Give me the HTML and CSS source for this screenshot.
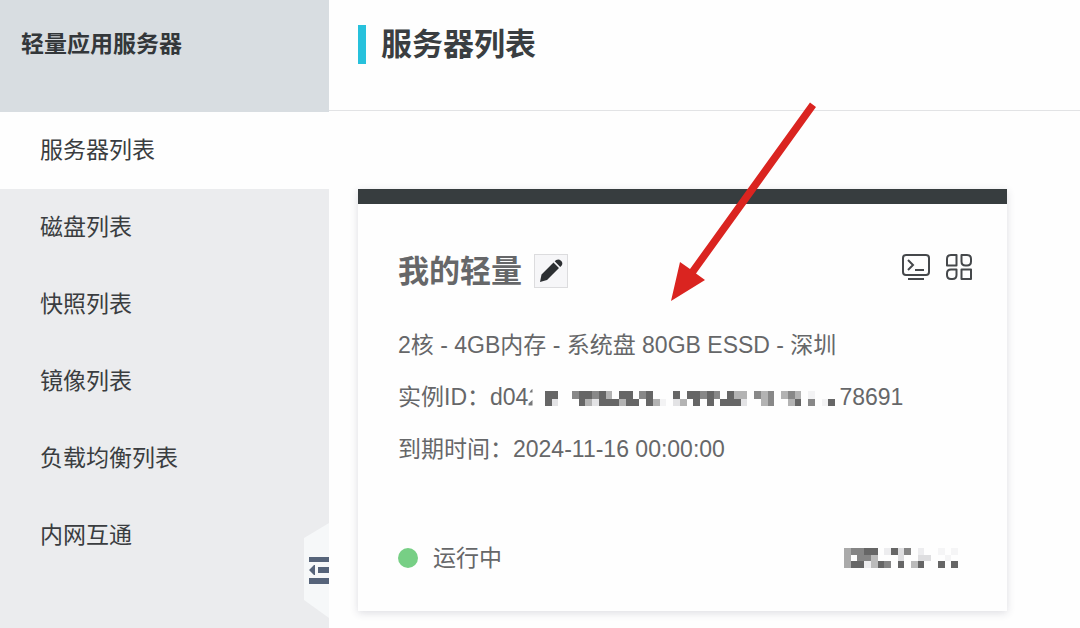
FILE: index.html
```html
<!DOCTYPE html>
<html lang="zh-CN">
<head>
<meta charset="utf-8">
<meta name="viewport" content="width=device-width, initial-scale=1">
<title>服务器列表</title>
<link rel="stylesheet" href="styles.css">
</head>
<body>
<div class="layout">
  <aside class="sidebar">
    <div class="sidebar-title">轻量应用服务器</div>
    <nav class="menu">
      <a class="menu-item active" href="#servers" aria-current="page">服务器列表</a>
      <a class="menu-item" href="#disks">磁盘列表</a>
      <a class="menu-item" href="#snapshots">快照列表</a>
      <a class="menu-item" href="#images">镜像列表</a>
      <a class="menu-item" href="#balancers">负载均衡列表</a>
      <a class="menu-item" href="#intranet">内网互通</a>
    </nav>
    <button class="collapse" type="button" aria-label="收起菜单">
      <svg width="25" height="95" viewBox="0 0 25 95" aria-hidden="true">
        <path d="M25 0 0 15v62l25 18z" fill="#f6f8f9"/>
        <path d="M5 34h20v5H5zM14 44h11v6H14zM5 55h20v6H5zM5 47l5-5h1v10h-1z" fill="#56647a"/>
      </svg>
    </button>
  </aside>
  <main class="main">
    <header class="page-head">
      <h1 class="page-title">服务器列表</h1>
    </header>
    <section class="content">
      <article class="card">
        <div class="card-head">
          <h2 class="card-title">我的轻量</h2>
          <button class="edit" type="button" aria-label="编辑名称">
            <svg width="32" height="32" viewBox="0 0 32 32" aria-hidden="true">
              <path d="M5 27 6.500 19.500 18.500 7.500 24 13 12 25zM19.700 6.300l1.500-1.300q2.500-1.500 4.800.7t.7 4.800l-1.500 1.500z" fill="#2c2f32"/>
            </svg>
          </button>
          <div class="tools">
            <button class="tool" type="button" aria-label="远程连接">
              <svg width="28" height="28" viewBox="0 0 28 28" fill="none" stroke="#45484b" stroke-width="2" aria-hidden="true">
                <rect x="1" y="1" width="26" height="20" rx="3"/>
                <path d="M6 6l5 5-5 5M13 16h9M6 25h16"/>
              </svg>
            </button>
            <button class="tool" type="button" aria-label="更多操作">
              <svg width="28" height="28" viewBox="0 0 28 28" fill="none" stroke="#45484b" stroke-width="2" aria-hidden="true">
                <path d="M6 1h5.500v10.500H2V5q0-4 4-4zM16.500 1H22q4 0 4 4v2.500q0 4-4 4h-1.500q-4 0-4-4zM6 15.500h5.500V21q0 4-4 4H6q-4 0-4-4v-1.500q0-4 4-4zM16.500 15.500H26V25h-9.500z" stroke-linejoin="round"/>
              </svg>
            </button>
          </div>
        </div>
        <div class="info">
          <p class="line">2核 - 4GB内存 - 系统盘 80GB ESSD - 深圳</p>
          <p class="line id-line">实例ID：d04
            <svg class="mask-id" width="307" height="17" viewBox="0 0 307 17" aria-hidden="true">
              <path fill="#77787a" d="M3 1 4.500 0v3.500H1.500zM4.500 11v5.500H0.500v-2z"/>
              <svg x="17" y="2" width="290" height="15" viewBox="0 0 43 2" preserveAspectRatio="none" shape-rendering="crispEdges">
                <path fill="#666" d="M0 0h1v2h-1zM1 0h1v1h-1zM5 0h1v2h-1zM6 0h1v1h-1zM8 0h1v2h-1zM9 1h2v1h-2zM11 0h1v1h-1zM12 0h1v2h-1zM13 1h1v1h-1zM15 0h1v2h-1zM19 0h1v1h-1zM21 0h1v1h-1zM22 0h1v2h-1zM24 0h1v2h-1zM26 1h3v1h-3zM27 0h1v1h-1zM37 1h1v1h-1zM42 1h1v1h-1z"/>
                <path fill="#888" d="M4 0h1v1h-1zM7 0h1v1h-1zM14 0h1v1h-1zM23 0h1v1h-1zM25 0h1v1h-1zM31 0h1v1h-1zM33 0h1v2h-1zM36 0h1v1h-1zM39 1h1v1h-1z"/>
                <path fill="#b3b3b3" d="M6 1h1v1h-1zM9 0h1v1h-1zM11 1h1v1h-1zM16 1h1v1h-1zM20 1h1v1h-1zM28 0h2v1h-2zM32 0h1v2h-1zM35 0h1v1h-1zM36 1h1v1h-1zM37 0h1v1h-1z"/>
                <path fill="#e3e3e5" d="M1 1h1v1h-1zM7 1h1v1h-1zM19 1h1v1h-1zM29 1h1v1h-1z"/>
                <path fill="#f3f3f4" d="M17 1h1v1h-1zM39 0h1v1h-1zM41 1h1v1h-1z"/>
              </svg>
            </svg><span>78691</span></p>
          <p class="line">到期时间：2024-11-16 00:00:00</p>
        </div>
        <div class="card-foot">
          <span class="dot"></span>
          <span class="status">运行中</span>
          <svg class="mask-foot" width="114" height="20" viewBox="0 0 17 3" preserveAspectRatio="none" shape-rendering="crispEdges" aria-hidden="true">
            <path fill="#666" d="M3 0h2v1h-2zM7 0h1v1h-1zM1 2h2v1h-2zM5 2h1v1h-1zM8 2h1v1h-1zM11 2h1v1h-1zM14 2h1v1h-1zM16 2h1v1h-1z"/>
            <path fill="#858585" d="M1 0h2v1h-2zM2 1h2v1h-2zM9 0h1v1h-1zM6 2h1v1h-1z"/>
            <path fill="#aaa" d="M0 0h1v3h-1z"/>
            <path fill="#bbb" d="M4 1h1v2h-1zM10 2h1v1h-1z"/>
            <path fill="#dedee0" d="M8 0h1v2h-1zM11 1h2v1h-2z"/>
            <path fill="#ededef" d="M6 0h1v1h-1zM3 2h1v1h-1zM11 0h1v1h-1z"/>
            <path fill="#f5f5f6" d="M14 0h1v1h-1zM16 0h1v1h-1zM15 1h1v1h-1z"/>
          </svg>
        </div>
      </article>
    </section>
    <svg class="arrow" width="145" height="199" viewBox="671 102 145 199" aria-hidden="true">
      <path d="M810 102.500 816 107 696 273.500 705 280 671 301 680 262 690 269z" fill="#da2420"/>
    </svg>
  </main>
</div>
</body>
</html>
```
FILE: styles.css
```css
* {
  box-sizing: border-box;
}

body {
  margin: 0;
  background: #fefefe;
  color: #3a3e41;
  font-family: "Liberation Sans", "Noto Sans CJK SC", sans-serif;
  font-size: 23px;
}

h1,
h2,
p {
  margin: 0;
}

button {
  padding: 0;
  border: 0;
  background: none;
  cursor: pointer;
}

svg {
  display: block;
  flex: none;
}

.layout {
  display: flex;
  min-height: 100vh;
}

.sidebar {
  position: relative;
  flex: none;
  width: 329px;
  background: #ebecee;
}

.sidebar-title {
  padding: 24px 21px 48px;
  background: #d8dde1;
  color: #33373a;
  font-weight: 700;
  line-height: 40px;
}

.menu {
  display: flex;
  flex-direction: column;
}

.menu-item {
  padding: 0 40px;
  color: #3a3d40;
  line-height: 77px;
  text-decoration: none;
}

.menu-item.active {
  background: #fefefe;
}

.collapse {
  position: absolute;
  right: 0;
  top: 523px;
}

.main {
  position: relative;
  flex: 1;
  min-width: 0;
}

.page-head {
  padding: 25px 29px 46px;
  border-bottom: 1px solid #e2e3e5;
}

.page-title {
  padding-left: 15px;
  border-left: 8px solid #27c1dc;
  font-size: 31px;
  font-weight: 700;
  line-height: 39px;
}

.content {
  padding: 78px 73px 17px 29px;
}

.card {
  padding: 50px 34px 33px 40px;
  border-top: 15px solid #373d3f;
  background: #fefefe;
  box-shadow: 0 2px 8px rgba(50, 50, 80, 0.16);
  color: #666769;
}

.card-head {
  display: flex;
  align-items: flex-start;
}

.card-title {
  font-size: 31px;
  font-weight: 700;
  line-height: 35px;
}

.edit {
  margin-left: 12px;
  border: 1px solid #dcdcde;
  background: #f6f6f8;
}

.tools {
  display: flex;
  gap: 15px;
  margin-left: auto;
}

.info {
  padding-top: 30px;
}

.line {
  line-height: 52px;
}

.id-line {
  display: flex;
  align-items: center;
}

.mask-id {
  margin-right: 4px;
}

.card-foot {
  display: flex;
  align-items: center;
  padding-top: 63px;
  line-height: 40px;
}

.dot {
  width: 20px;
  height: 20px;
  margin-right: 15px;
  border-radius: 50%;
  background: #77cf85;
}

.mask-foot {
  margin: 0 15px 0 auto;
}

.arrow {
  position: absolute;
  left: 342px;
  top: 102px;
  pointer-events: none;
}
```
